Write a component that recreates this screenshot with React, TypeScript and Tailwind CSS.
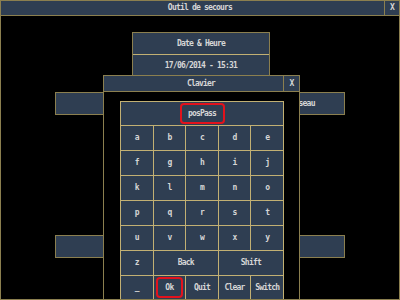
const keys: { label: string; span?: number; mark?: boolean }[][] = [
  [{ label: "a" }, { label: "b" }, { label: "c" }, { label: "d" }, { label: "e" }],
  [{ label: "f" }, { label: "g" }, { label: "h" }, { label: "i" }, { label: "j" }],
  [{ label: "k" }, { label: "l" }, { label: "m" }, { label: "n" }, { label: "o" }],
  [{ label: "p" }, { label: "q" }, { label: "r" }, { label: "s" }, { label: "t" }],
  [{ label: "u" }, { label: "v" }, { label: "w" }, { label: "x" }, { label: "y" }],
  [{ label: "z" }, { label: "Back", span: 2 }, { label: "Shift", span: 2 }],
  [{ label: "_" }, { label: "Ok", mark: true }, { label: "Quit" }, { label: "Clear" }, { label: "Switch" }],
];

// old-style terminal font: narrow mono, bold
const font = {
  fontFamily: '"DejaVu Sans Mono", "Liberation Mono", monospace',
};

function MenuButton({ label, className }: { label: string; className: string }) {
  return (
    <div
      className={`flex h-[23px] items-center justify-center border border-[#8b7f4f] bg-[#2f3e52] ${className}`}
    >
      {label}
    </div>
  );
}

function Keyboard() {
  return (
    <div className="grid w-[164px] grid-cols-5 gap-px bg-[#c2b073] p-px">
      <div className="col-span-5 flex h-[23px] items-center justify-center bg-[#2f3e52]">
        <div className="flex h-[21px] w-[45px] items-center justify-center rounded-[4px] border-2 border-[#e3121c]">
          posPass
        </div>
      </div>
      {keys.map((row) =>
        row.map((k) => (
          <div
            key={k.label}
            className={`flex h-[24px] items-start justify-center bg-[#2f3e52] ${
              k.span === 2 ? "col-span-2" : ""
            }`}
          >
            {k.mark ? (
              <div className="mt-px flex h-[21px] w-[27px] items-center justify-center rounded-[4px] border-2 border-[#e3121c]">
                {k.label}
              </div>
            ) : (
              <div className="flex h-[24px] items-center">{k.label}</div>
            )}
          </div>
        ))
      )}
    </div>
  );
}

export default function App() {
  return (
    <div
      style={font}
      className="relative h-[300px] w-[400px] overflow-hidden border border-[#8b7f4f] bg-black text-[8px] font-bold tracking-[-0.8px] text-[#d6d6d6]"
    >
      {/* main window title */}
      <div className="flex h-[15px] items-stretch border-b border-[#8b7f4f] bg-[#2f3e52]">
        <div className="w-[15px]" />
        <div className="flex flex-1 items-center justify-center">Outil de secours</div>
        <div className="flex w-[15px] items-center justify-center border-l border-[#8b7f4f]">X</div>
      </div>

      {/* date block */}
      <div className="ml-[131px] mt-[16px] flex w-[138px] flex-col border border-[#8b7f4f] bg-[#2f3e52]">
        <div className="flex h-[21px] items-center justify-center">Date &amp; Heure</div>
        <div className="flex h-[22px] items-center justify-center border-t border-[#c2b073]">
          17/06/2014 - 15:31
        </div>
      </div>

      {/* menu buttons behind the keyboard */}
      <div className="ml-[54px] mt-[15px] flex gap-[8px]">
        <MenuButton label="Imprimante" className="w-[141px]" />
        <MenuButton label="Configuration réseau" className="w-[141px]" />
      </div>
      <div className="ml-[54px] mt-[120px] flex gap-[8px]">
        <MenuButton label="Calibrage" className="w-[141px]" />
        <MenuButton label="Journaux" className="w-[141px]" />
      </div>

      {/* Clavier dialog */}
      <div className="absolute left-[102px] top-[74px] h-[240px] w-[197px] border border-[#8b7f4f] bg-black">
        <div className="flex h-[16px] items-stretch border-b border-[#8b7f4f] bg-[#2f3e52]">
          <div className="w-[15px]" />
          <div className="flex flex-1 items-center justify-center">Clavier</div>
          <div className="flex w-[16px] items-center justify-center border-l border-[#8b7f4f]">X</div>
        </div>
        <div className="pl-[16px] pt-[9px]">
          <Keyboard />
        </div>
      </div>
    </div>
  );
}
